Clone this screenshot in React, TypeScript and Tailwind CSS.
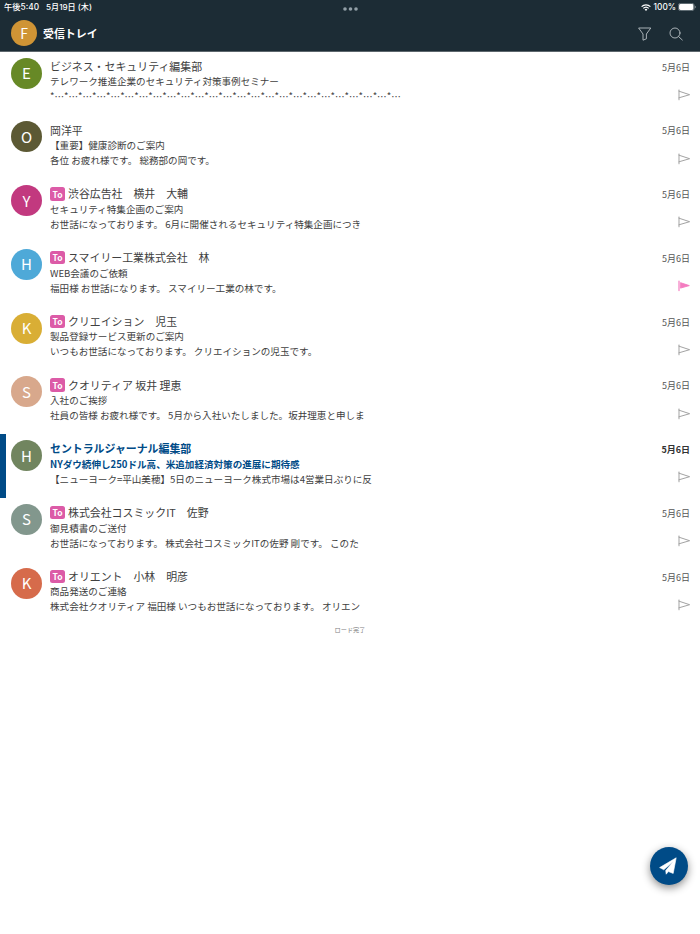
import clsx from "clsx";

interface Mail {
  initial: string;
  color: string;
  to?: boolean;
  name: string;
  subject: string;
  preview: string;
  flagged?: boolean;
  unread?: boolean;
}

const mails: Mail[] = [
  { initial: "E", color: "bg-[#678926]", name: "ビジネス・セキュリティ編集部", subject: "テレワーク推進企業のセキュリティ対策事例セミナー", preview: "*…".repeat(25) },
  { initial: "O", color: "bg-[#5c5934]", name: "岡洋平", subject: "【重要】健康診断のご案内", preview: "各位 お疲れ様です。 総務部の岡です。" },
  { initial: "Y", color: "bg-[#c2397f]", to: true, name: "渋谷広告社　横井　大輔", subject: "セキュリティ特集企画のご案内", preview: "お世話になっております。 6月に開催されるセキュリティ特集企画につき" },
  { initial: "H", color: "bg-[#4ea9d8]", to: true, name: "スマイリー工業株式会社　林", subject: "WEB会議のご依頼", preview: "福田様 お世話になります。 スマイリー工業の林です。", flagged: true },
  { initial: "K", color: "bg-[#d9ae35]", to: true, name: "クリエイション　児玉", subject: "製品登録サービス更新のご案内", preview: "いつもお世話になっております。 クリエイションの児玉です。" },
  { initial: "S", color: "bg-[#d8a88c]", to: true, name: "クオリティア 坂井 理恵", subject: "入社のご挨拶", preview: "社員の皆様 お疲れ様です。 5月から入社いたしました。坂井理恵と申しま" },
  { initial: "H", color: "bg-[#71855f]", name: "セントラルジャーナル編集部", subject: "NYダウ続伸し250ドル高、米追加経済対策の進展に期待感", preview: "【ニューヨーク=平山美穂】5日のニューヨーク株式市場は4営業日ぶりに反", unread: true },
  { initial: "S", color: "bg-[#82978d]", to: true, name: "株式会社コスミックIT　佐野", subject: "御見積書のご送付", preview: "お世話になっております。 株式会社コスミックITの佐野 剛です。 このた" },
  { initial: "K", color: "bg-[#d66b4b]", to: true, name: "オリエント　小林　明彦", subject: "商品発送のご連絡", preview: "株式会社クオリティア 福田様 いつもお世話になっております。 オリエン" },
];

function Flag({ on }: { on?: boolean }) {
  return (
    <svg className="h-3 w-3" viewBox="0 0 12 12" fill="none" stroke={on ? "#f47cc0" : "#999"} strokeWidth="0.9" strokeLinejoin="round" strokeLinecap="round">
      {on ? (
        <>
          <path d="M1 1v9.6" strokeWidth="1.2" />
          <path d="M2.8 2.8 11.3 5.6 2.8 8z" fill="#f47cc0" />
        </>
      ) : (
        <path d="M1 10.8V1M1 2.2 11.6 5.7 1 8.8" />
      )}
    </svg>
  );
}

function StatusBar() {
  return (
    <div className="flex h-[14px] items-center justify-between pr-1 pl-1 font-['Inter','Noto_Sans_CJK_JP',sans-serif] text-[8.3px] leading-[14px] font-medium">
      <div className="flex w-[120px] gap-[7px] whitespace-nowrap">
        <span>午後5:40</span>
        <span className="text-[8.1px]">5月19日 (木)</span>
      </div>
      <svg className="mt-[4px] h-1 w-[15px]" viewBox="0 0 15 4" fill="#93a0a8">
        <circle cx="2" cy="2" r="1.8" />
        <circle cx="7.5" cy="2" r="1.8" />
        <circle cx="13" cy="2" r="1.8" />
      </svg>
      <div className="flex w-[120px] items-center justify-end">
        <svg className="h-[7px] w-[10px]" viewBox="0 0 10 7" fill="none" stroke="#fff" strokeWidth="1.3">
          <path d="M.6 2.6a6.3 6.3 0 0 1 8.8 0M2.3 4.4a3.9 3.9 0 0 1 5.4 0" />
          <path d="M5 6.9 3.6 5.5a2 2 0 0 1 2.8 0z" fill="#fff" stroke="none" />
        </svg>
        <span className="ml-[2.5px]">100%</span>
        <svg className="ml-[2px] h-2 w-[18px]" viewBox="0 0 18 8">
          <rect x=".35" y=".35" width="15.8" height="7.3" rx="2.2" fill="none" stroke="#8d989e" strokeWidth=".7" />
          <rect x="1.1" y="1.1" width="14.3" height="5.8" rx="1.4" fill="#fff" />
          <path d="M17 2.8a1.3 1.3 0 0 1 0 2.4z" fill="#8d989e" />
        </svg>
      </div>
    </div>
  );
}

function MailRow({ mail }: { mail: Mail }) {
  return (
    <li className={clsx("flex h-[63.75px] border-l-[6px] pr-[10px] pl-[5px]", mail.unread ? "border-[#004b87]" : "border-transparent")}>
      <div className={clsx("mt-[6px] flex size-[31px] shrink-0 items-center justify-center rounded-full pb-px text-[15px] leading-none text-white", mail.color)}>
        {mail.initial}
      </div>
      <div className="ml-2 min-w-0 flex-1 pt-[7px] text-[9.57px] leading-[15px] whitespace-nowrap text-[#404040]">
        <div className={clsx("flex h-[15.8px] items-center text-[10.92px]", mail.unread && "font-bold text-[#004b87]")}>
          {mail.to && (
            <span className="mr-[3px] flex h-[13.5px] w-[15px] items-center justify-center rounded-[2.5px] bg-[#dc5ba7] text-[8.5px] leading-none font-bold text-white">
              To
            </span>
          )}
          {mail.name}
        </div>
        <div className={clsx(mail.unread && "font-bold text-[#004b87]")}>{mail.subject}</div>
        <div>{mail.preview}</div>
      </div>
      <div className="flex flex-col items-end pt-[8px]">
        <span className={clsx("text-[9px] leading-[15px]", mail.unread ? "font-bold text-[#333]" : "text-[#555]")}>5月6日</span>
        <div className="mt-[14.4px]">
          <Flag on={mail.flagged} />
        </div>
      </div>
    </li>
  );
}

export default function App() {
  return (
    <div className="relative h-[934px] w-[700px] overflow-hidden bg-white font-['Noto_Sans_CJK_JP',sans-serif]">
      <header className="h-[51.6px] border-b border-[#5d676d] bg-[#1c2c35] text-white">
        <StatusBar />
        <div className="flex h-[38px] items-center pr-[17.5px] pl-[11px]">
          <div className="flex size-[26px] items-center justify-center rounded-full bg-[#cf9435] text-[14px] leading-none">F</div>
          <h1 className="ml-[6px] text-[10.95px] font-bold">受信トレイ</h1>
          <svg className="mt-[2px] ml-auto size-[14px]" viewBox="0 0 14 14" fill="none" stroke="#b8c0c4" strokeWidth=".9" strokeLinejoin="round">
            <path d="M.6 1h12.2L8.4 7v4.8L5 13.2V7z" />
          </svg>
          <svg className="mt-[2px] ml-[17px] size-[14px]" viewBox="0 0 14 14" fill="none" stroke="#b8c0c4" strokeWidth=".9" strokeLinecap="round">
            <circle cx="6" cy="6" r="5" />
            <path d="m9.7 9.7 3.6 3.3" />
          </svg>
        </div>
      </header>

      <ul>
        {mails.map((mail, i) => (
          <MailRow key={i} mail={mail} />
        ))}
      </ul>
      <p className="pt-[1px] text-center text-[6.2px] leading-[8px] text-[#808080]">ロード完了</p>

      <button className="absolute top-[847px] left-[650px] flex size-[38px] items-center justify-center rounded-full bg-[#004b87] shadow-[0_3px_9px_rgba(0,0,0,0.45)]">
        <svg className="mr-[2px] size-[18px]" viewBox="0 0 18 18" fill="#fff" stroke="#fff" strokeWidth=".6" strokeLinejoin="round">
          <path d="M17.2.8.6 10.6 4.8 12.8 14.2 4.4 6.7 13.6 7.2 17.2 9.4 14.6 14.2 16.4z" />
        </svg>
      </button>
    </div>
  );
}
